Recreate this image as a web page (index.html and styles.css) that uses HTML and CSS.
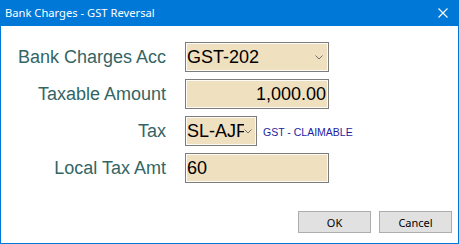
FILE: index.html
```html
<!DOCTYPE html>
<html>
<head>
<meta charset="utf-8">
<link rel="stylesheet" href="styles.css">
</head>
<body>
<div class="window">
  <div class="titlebar">
    <span class="title">Bank Charges - GST Reversal</span>
    <svg class="close" width="10" height="10" viewBox="0 0 10 10"><path d="M0.5 0.5 L9.5 9.5 M9.5 0.5 L0.5 9.5" stroke="#fff" stroke-width="1.1" fill="none"/></svg>
  </div>
  <div class="content">
    <div class="form">
      <label class="lbl">Bank Charges Acc</label>
      <div class="field combo wide"><span class="val">GST-202</span><svg class="chev" width="8" height="5" viewBox="0 0 8 5"><polyline points="0.5,0.5 4,4 7.5,0.5" stroke="#707070" stroke-width="1" fill="none"/></svg></div>

      <label class="lbl">Taxable Amount</label>
      <div class="field wide right"><span class="val">1,000.00</span></div>

      <label class="lbl">Tax</label>
      <div class="taxrow">
        <div class="field combo narrow"><span class="val">SL-AJF</span><svg class="chev" width="8" height="5" viewBox="0 0 8 5"><polyline points="0.5,0.5 4,4 7.5,0.5" stroke="#707070" stroke-width="1" fill="none"/></svg></div>
        <span class="taxdesc">GST - CLAIMABLE</span>
      </div>

      <label class="lbl">Local Tax Amt</label>
      <div class="field wide"><span class="val">60</span></div>
    </div>
    <div class="buttons">
      <button class="btn">OK</button>
      <button class="btn">Cancel</button>
    </div>
  </div>
</div>
</body>
</html>
```
FILE: styles.css
```css
html, body {
  margin: 0;
  padding: 0;
  background: #ffffff;
}
.window {
  width: 459px;
  height: 244px;
  box-sizing: border-box;
  border: 1px solid #0078d7;
  border-top: none;
  display: flex;
  flex-direction: column;
  background: #fff;
}
.titlebar {
  height: 26px;
  background: #0078d7;
  margin: 0 -1px;
  display: flex;
  align-items: center;
  justify-content: space-between;
  padding: 0 11px 0 5px;
  color: #fff;
  font-family: "Noto Sans", "DejaVu Sans", sans-serif;
  font-size: 11.2px;
}
.title {
  line-height: 26px;
}
.close {
  display: block;
}
.content {
  flex: 1;
  display: flex;
  flex-direction: column;
  padding-top: 16px;
}
.form {
  display: grid;
  grid-template-columns: 165px 144px;
  grid-auto-rows: 30px;
  column-gap: 19px;
  row-gap: 7px;
}
.lbl {
  font-family: "Liberation Sans", Arial, sans-serif;
  font-size: 18px;
  line-height: 30px;
  color: #336565;
  text-align: right;
  white-space: nowrap;
}
.field {
  box-sizing: border-box;
  height: 30px;
  border: 1px solid #7c7c7c;
  box-shadow: inset 0 0 0 1px #fdfbf6;
  background: #efe0c0;
  display: flex;
  align-items: center;
  font-family: "Liberation Sans", Arial, sans-serif;
  font-size: 18px;
  line-height: 28px;
  color: #000;
  padding: 0 2px 0 1px;
  overflow: hidden;
  position: relative;
  flex: none;
}
.field.wide {
  width: 144px;
}
.field.right {
  justify-content: flex-end;
}
.val {
  white-space: nowrap;
  overflow: hidden;
}
.combo .val {
  flex: 1;
  min-width: 0;
  margin-right: 10px;
}
.chev {
  position: absolute;
  right: 5px;
  top: 12px;
}
.combo.narrow {
  width: 72px;
}
.combo.narrow .chev {
  right: 4px;
}
.taxrow {
  display: flex;
  align-items: center;
  gap: 6px;
}
.taxdesc {
  font-family: "Liberation Sans", Arial, sans-serif;
  font-size: 10.5px;
  color: #1e1e9e;
  white-space: nowrap;
  padding-top: 2px;
}
.buttons {
  display: flex;
  justify-content: flex-end;
  gap: 8px;
  padding-right: 6px;
  margin-top: 28px;
}
.btn {
  width: 73px;
  height: 22px;
  box-sizing: border-box;
  border: 1px solid #adadad;
  background: #e1e1e1;
  font-family: "Noto Sans", "DejaVu Sans", sans-serif;
  font-size: 11px;
  color: #000;
  padding: 0;
  margin: 0;
}
```
